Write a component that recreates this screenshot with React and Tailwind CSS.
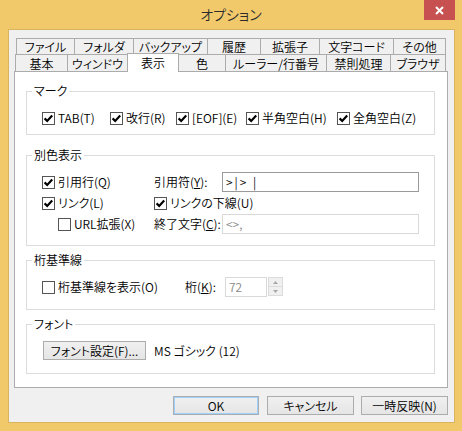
const F = "font-['Noto_Sans_CJK_JP',sans-serif] font-[350] [font-feature-settings:'palt']";

function Check({ checked }) {
  return (
    <span className="w-[13px] h-[13px] border border-[#555] bg-white flex items-center justify-center shrink-0">
      {checked && (
        <svg width="11" height="11" viewBox="0 0 11 11">
          <path d="M1.6 5.4 L4.2 8 L9.2 2.6" fill="none" stroke="#000" strokeWidth="2.2" />
        </svg>
      )}
    </span>
  );
}

function CheckItem({ checked, label, className = "" }) {
  return (
    <div className={`flex items-center gap-[3px] ${className}`}>
      <Check checked={checked} />
      <span className="leading-[16px] whitespace-nowrap">{label}</span>
    </div>
  );
}

function Group({ title, className = "", children }) {
  return (
    <div className={`relative border border-[#dcdcdc] ${className}`}>
      <span className="absolute left-[5px] -top-[9px] bg-white px-[2px] leading-[16px]">{title}</span>
      {children}
    </div>
  );
}

function Button({ children, className = "" }) {
  return (
    <div
      className={`h-[19px] flex items-center justify-center border border-[#acacac] bg-gradient-to-b from-[#f0f0f0] to-[#e5e5e5] leading-[16px] ${className}`}
    >
      {children}
    </div>
  );
}

const row1 = [
  ["ファイル", 59],
  ["フォルダ", 60],
  ["バックアップ", 75],
  ["履歴", 54],
  ["拡張子", 60],
  ["文字コード", 75],
  ["その他", 53],
];

const row2 = [
  ["基本", 53],
  ["ウィンドウ", 61],
  ["表示", 52, true],
  ["色", 48],
  ["ルーラー/行番号", 102],
  ["禁則処理", 65],
  ["ブラウザ", 56],
];

export default function App() {
  return (
    <div className={`w-[462px] h-[431px] bg-[#f1c96b] flex flex-col text-[12px] text-black ${F}`}>
      {/* title bar */}
      <div className="relative h-[29px] flex items-center justify-center">
        <span className="text-[14px] text-[#2b2b2b] leading-[20px] -mt-[1px]">オプション</span>
        <div className="absolute top-0 right-[7px] w-[31px] h-[20px] bg-[#c75050] flex items-center justify-center">
          <svg width="9" height="9" viewBox="0 0 9 9">
            <path d="M1 1 L8 8 M8 1 L1 8" stroke="#fff" strokeWidth="2" />
          </svg>
        </div>
      </div>

      {/* client */}
      <div className="ml-[8px] mr-[7px] h-[394px] border border-[#d9b45e] bg-[#f0f0f0] pt-[8px] px-[5px] flex flex-col">
        {/* tabs */}
        <div className="flex h-[16px] pl-[2px]">
          {row1.map(([t, w], i) => (
            <div
              key={t}
              style={{ width: w }}
              className={`h-[16px] border-t border-l border-r border-[#acacac] bg-[#f0f0f0] flex items-center justify-center leading-[15px] ${i ? "-ml-px" : ""}`}
            >
              {t}
            </div>
          ))}
        </div>
        <div className="flex items-end h-[17px] pl-[1px]">
          {row2.map(([t, w, sel], i) =>
            sel ? (
              <div
                key={t}
                style={{ width: w }}
                className="relative z-10 h-[19px] -mb-px -ml-px border-t border-l border-r border-[#acacac] bg-white flex items-start justify-center pt-[1px] leading-[15px]"
              >
                {t}
              </div>
            ) : (
              <div
                key={t}
                style={{ width: w }}
                className={`h-[17px] border-t border-l border-r border-[#acacac] bg-[#f0f0f0] flex items-center justify-center leading-[15px] ${i ? "-ml-px" : ""}`}
              >
                {t}
              </div>
            )
          )}
        </div>

        {/* panel */}
        <div className="w-[434px] h-[317px] border border-[#acacac] bg-white pt-[19px] pl-[11px]">
          <Group title="マーク" className="w-[409px] h-[44px]">
            <div className="flex items-center h-[16px] mt-[18px] pl-[15px]">
              <CheckItem checked label="TAB(T)" className="w-[68px]" />
              <CheckItem checked label="改行(R)" className="w-[66px]" />
              <CheckItem checked label="[EOF](E)" className="w-[70px]" />
              <CheckItem checked label="半角空白(H)" className="w-[91px]" />
              <CheckItem checked label="全角空白(Z)" />
            </div>
          </Group>

          <Group title="別色表示" className="w-[409px] h-[91px] mt-[20px]">
            <div className="pt-[16px] pl-[15px]">
              <div className="flex items-center h-[20px]">
                <CheckItem checked label="引用行(Q)" className="w-[112px]" />
                <span className="w-[68px] leading-[16px]">
                  引用符(<u>Y</u>):
                </span>
                <div className="w-[197px] h-[20px] border border-[#9a9a9a] bg-white flex items-center pl-[3px] leading-[16px] tracking-[2px]">
                  &gt;|&gt; |
                </div>
              </div>
              <div className="flex items-center h-[22px]">
                <CheckItem checked label="リンク(L)" className="w-[112px]" />
                <CheckItem checked label="リンクの下線(U)" />
              </div>
              <div className="flex items-center h-[20px]">
                <div className="w-[112px] pl-[16px]">
                  <CheckItem checked={false} label="URL拡張(X)" />
                </div>
                <span className="w-[68px] leading-[16px]">
                  終了文字(<u>C</u>):
                </span>
                <div className="w-[197px] h-[20px] border border-[#d9d9d9] bg-white flex items-center pl-[3px] leading-[16px] text-[#8a8a8a]">
                  &lt;&gt;,
                </div>
              </div>
            </div>
          </Group>

          <Group title="桁基準線" className="w-[409px] h-[50px] mt-[14px]">
            <div className="flex items-center h-[20px] mt-[16px] pl-[15px]">
              <CheckItem checked={false} label="桁基準線を表示(O)" className="w-[143px]" />
              <span className="w-[40px] leading-[16px]">
                桁(<u>K</u>):
              </span>
              <div className="w-[42px] h-[20px] border border-[#d9d9d9] bg-white flex items-center pl-[3px] leading-[16px] text-[#8a8a8a]">
                72
              </div>
              <div className="ml-[1px] w-[15px] h-[19px] self-start border border-[#dcdcdc] bg-[#f0f0f0] flex flex-col">
                <div className="flex-1 flex items-center justify-center border-b border-[#dcdcdc]">
                  <svg width="5" height="3" viewBox="0 0 5 3">
                    <path d="M0 3 L2.5 0 L5 3 Z" fill="#a8a8a8" />
                  </svg>
                </div>
                <div className="flex-1 flex items-center justify-center">
                  <svg width="5" height="3" viewBox="0 0 5 3">
                    <path d="M0 0 L2.5 3 L5 0 Z" fill="#a8a8a8" />
                  </svg>
                </div>
              </div>
            </div>
          </Group>

          <Group title="フォント" className="w-[409px] h-[50px] mt-[14px]">
            <div className="flex items-center mt-[16px] pl-[16px]">
              <Button className="w-[103px] h-[18px]">フォント設定(F)...</Button>
              <span className="ml-[8px] leading-[16px]">MS ゴシック (12)</span>
            </div>
          </Group>
        </div>

        {/* buttons */}
        <div className="flex justify-end mt-[8px] pr-[1px]">
          <Button className="w-[86px] border-[#3399ff] shadow-[inset_0_0_0_1px_#9cd0ff]">OK</Button>
          <Button className="w-[87px] ml-[8px]">キャンセル</Button>
          <Button className="w-[87px] ml-[7px]">一時反映(N)</Button>
        </div>
      </div>
    </div>
  );
}
